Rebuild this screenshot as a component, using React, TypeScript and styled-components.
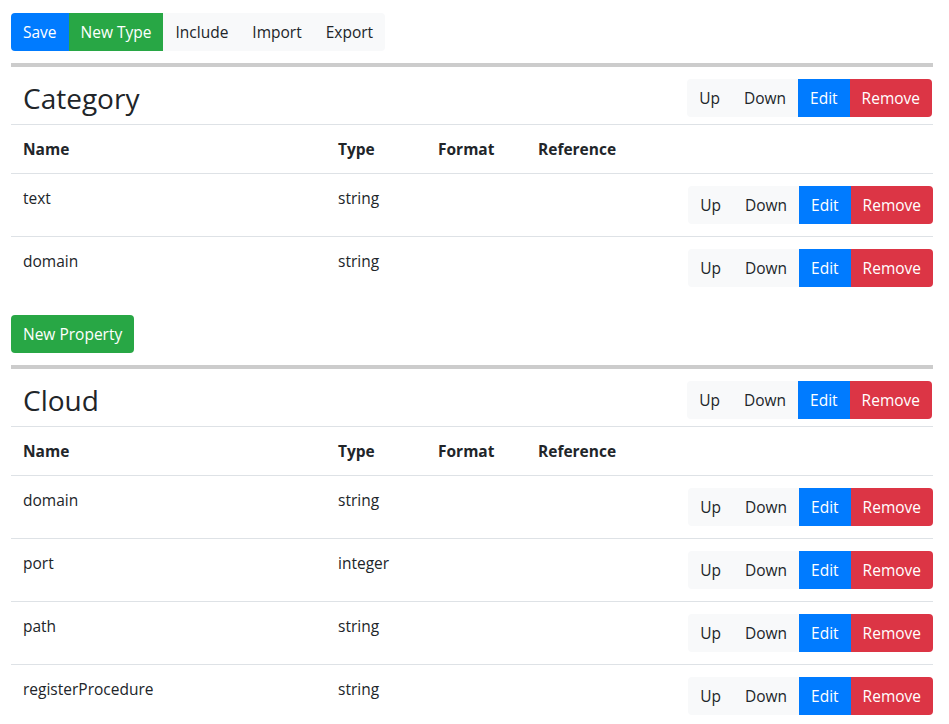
import React from "react";
import styled, { createGlobalStyle } from "styled-components";

const GlobalStyle = createGlobalStyle`
  html, body { margin: 0; padding: 0; background: #fff; }
  body {
    font-family: "Open Sans", "Noto Sans", "Liberation Sans", sans-serif;
    font-size: 15.5px;
    line-height: 24px;
    color: #212529;
  }
  * { box-sizing: border-box; }
`;

const Page = styled.div`
  padding: 13px 16px 0 11px;
`;

const Group = styled.div`
  display: inline-flex;
  border-radius: 4px;
  overflow: hidden;
  vertical-align: top;
`;

type Variant = "primary" | "success" | "light" | "danger";

const colors: Record<Variant, { bg: string; fg: string }> = {
  primary: { bg: "#007bff", fg: "#fff" },
  success: { bg: "#28a745", fg: "#fff" },
  light: { bg: "#f8f9fa", fg: "#212529" },
  danger: { bg: "#dc3545", fg: "#fff" },
};

const Btn = styled.button<{ $v: Variant }>`
  font: inherit;
  height: 38px;
  padding: 0 12px;
  border: none;
  margin: 0;
  background: ${(p) => colors[p.$v].bg};
  color: ${(p) => colors[p.$v].fg};
  cursor: pointer;
  white-space: nowrap;
`;

const SoloBtn = styled(Btn)`
  border-radius: 4px;
`;

const Toolbar = styled.div`
  display: flex;
  margin-bottom: 12px;
`;

const Divider = styled.div`
  height: 4px;
  background: #ccc;
`;

const TypeHeader = styled.div`
  display: flex;
  justify-content: space-between;
  align-items: center;
  padding: 12px 1px 7px 12px;
`;

const Title = styled.h3`
  margin: 0;
  font-size: 28px;
  font-weight: 500;
  line-height: 36px;
`;

const Table = styled.table`
  width: 100%;
  border-collapse: collapse;
  table-layout: fixed;
  margin-bottom: 16px;
`;

const Th = styled.th`
  text-align: left;
  font-weight: 700;
  padding: 12px;
  border-top: 1px solid #dee2e6;
  vertical-align: top;
`;

const Td = styled.td<{ $actions?: boolean }>`
  padding: ${(p) => (p.$actions ? "12px 0 12px 12px" : "12px")};
  border-top: 1px solid #dee2e6;
  vertical-align: top;
  text-align: ${(p) => (p.$actions ? "right" : "left")};
`;

const AddBar = styled.div`
  display: flex;
  margin-bottom: 12px;
`;

type Prop = { name: string; type: string };

const ActionGroup = () => (
  <Group>
    <Btn $v="light">Up</Btn>
    <Btn $v="light">Down</Btn>
    <Btn $v="primary">Edit</Btn>
    <Btn $v="danger">Remove</Btn>
  </Group>
);

const TypeSection = ({ title, props }: { title: string; props: Prop[] }) => (
  <section>
    <Divider />
    <TypeHeader>
      <Title>{title}</Title>
      <ActionGroup />
    </TypeHeader>
    <Table>
      <colgroup>
        <col style={{ width: 315 }} />
        <col style={{ width: 100 }} />
        <col style={{ width: 100 }} />
        <col style={{ width: 100 }} />
        <col />
      </colgroup>
      <thead>
        <tr>
          <Th>Name</Th>
          <Th>Type</Th>
          <Th>Format</Th>
          <Th>Reference</Th>
          <Th />
        </tr>
      </thead>
      <tbody>
        {props.map((p) => (
          <tr key={p.name}>
            <Td>{p.name}</Td>
            <Td>{p.type}</Td>
            <Td />
            <Td />
            <Td $actions>
              <ActionGroup />
            </Td>
          </tr>
        ))}
      </tbody>
    </Table>
    <AddBar>
      <SoloBtn $v="success">New Property</SoloBtn>
    </AddBar>
  </section>
);

export default function App() {
  return (
    <Page>
      <GlobalStyle />
      <Toolbar>
        <Group>
          <Btn $v="primary">Save</Btn>
          <Btn $v="success">New Type</Btn>
          <Btn $v="light">Include</Btn>
          <Btn $v="light">Import</Btn>
          <Btn $v="light">Export</Btn>
        </Group>
      </Toolbar>
      <TypeSection
        title="Category"
        props={[
          { name: "text", type: "string" },
          { name: "domain", type: "string" },
        ]}
      />
      <TypeSection
        title="Cloud"
        props={[
          { name: "domain", type: "string" },
          { name: "port", type: "integer" },
          { name: "path", type: "string" },
          { name: "registerProcedure", type: "string" },
        ]}
      />
    </Page>
  );
}
